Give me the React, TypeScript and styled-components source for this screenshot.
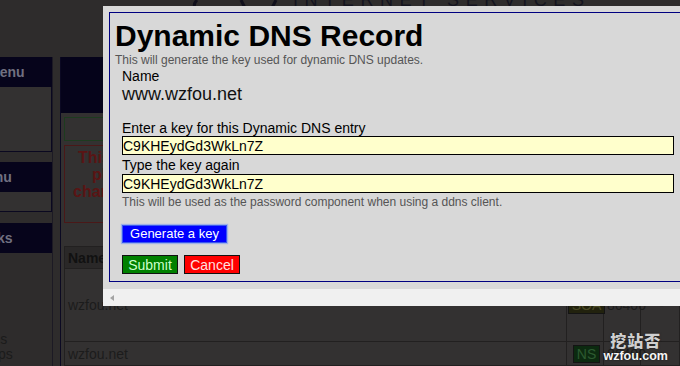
import styled, { createGlobalStyle } from "styled-components";

const GlobalStyle = createGlobalStyle`
  html, body {
    margin: 0;
    padding: 0;
  }
  body {
    background: #2e2c2c;
    font-family: "Liberation Sans", Arial, sans-serif;
  }
`;

const Page = styled.div`
  position: relative;
  width: 680px;
  height: 366px;
  overflow: hidden;
  background: #2e2c2c;
`;

/* ---------- dimmed page behind the dialog ---------- */

const Header = styled.div`
  height: 57px;
  display: flex;
  align-items: flex-start;
  padding-left: 190px;
  overflow: hidden;
`;

const Brand = styled.div`
  margin: -9px 0 0 3px;
  font-size: 18px;
  line-height: 18px;
  letter-spacing: 6.6px;
  color: #14141f;
  white-space: nowrap;
`;

const Body = styled.div`
  display: flex;
  align-items: stretch;
  height: 309px;
`;

const Sidebar = styled.div`
  width: 120px;
  margin-left: -68px;
  flex-shrink: 0;
  display: flex;
  flex-direction: column;
  border-right: 1px solid #1c1a24;
`;

const SideHead = styled.div<{ $indent: number; $gap: number }>`
  height: 30px;
  margin-top: ${({ $gap }) => $gap}px;
  padding-left: ${({ $indent }) => $indent}px;
  background: #06041b;
  color: #707080;
  font-size: 14px;
  font-weight: bold;
  line-height: 30px;
  white-space: nowrap;
`;

const SideBox = styled.div<{ $h: number }>`
  height: ${({ $h }) => $h}px;
  box-sizing: border-box;
  background: #333131;
  border-right: 1px solid #0a0820;
  border-bottom: 1px solid #0a0820;
`;

const SideLinks = styled.div`
  margin-top: auto;
  padding: 0 0 4px 27px;
  font-size: 14px;
  line-height: 15px;
  color: #1b1b1b;
`;

const Gutter = styled.div`
  width: 7px;
  flex-shrink: 0;
  border-right: 1px solid #0b0922;
`;

const Main = styled.div`
  flex: 1;
  display: flex;
  flex-direction: column;
  background: #333131;
`;

const Banner = styled.div`
  height: 57px;
  background: #05031a;
`;

const Notice = styled.div<{ $tone: "ok" | "warn"; $h: number }>`
  height: ${({ $h }) => $h}px;
  box-sizing: border-box;
  margin: 4px 0 0 3px;
  padding-top: 3px;
  border: 1px solid
    ${({ $tone }) => ($tone === "ok" ? "#1d3b1f" : "#4a1818")};
  color: #5a1414;
  font-size: 16px;
  font-weight: bold;
  line-height: 17px;
`;

const NoteLine = styled.div<{ $indent: number }>`
  padding-left: ${({ $indent }) => $indent}px;
  white-space: nowrap;
`;

const Table = styled.div`
  margin: 23px 0 0 3px;
  display: grid;
  grid-template-columns: 502px 37px 37px 1fr;
  border-left: 1px solid #222020;
  border-top: 1px solid #222020;
  color: #1a1a1a;
  font-size: 14px;
`;

const Cell = styled.div<{ $h: number; $head?: boolean; $center?: boolean }>`
  height: ${({ $h }) => $h}px;
  box-sizing: border-box;
  display: flex;
  align-items: center;
  justify-content: ${({ $center }) => ($center ? "center" : "flex-start")};
  padding-left: 3px;
  border-right: 1px solid #222020;
  border-bottom: 1px solid #222020;
  background: ${({ $head }) => ($head ? "#2a2828" : "transparent")};
  font-weight: ${({ $head }) => ($head ? "bold" : "normal")};
  color: ${({ $head }) => ($head ? "#111" : "#1c1c1c")};
`;

const Badge = styled.span<{ $kind: "soa" | "ns" }>`
  display: inline-block;
  padding: 0 3px;
  line-height: 16px;
  border: 1px solid #141414;
  background: ${({ $kind }) => ($kind === "soa" ? "#22220e" : "#0c2a10")};
  color: ${({ $kind }) => ($kind === "soa" ? "#4a4a24" : "#2c5a30")};
`;

const Watermark = styled.div`
  position: absolute;
  right: 12px;
  bottom: 3px;
  display: flex;
  flex-direction: column;
  align-items: center;
  text-shadow: 0 0 2px rgba(0, 0, 0, 0.6);
  font-weight: bold;
`;

const WmCn = styled.div`
  font-family: "Noto Sans CJK SC", sans-serif;
  font-size: 16px;
  font-weight: 900;
  line-height: 18px;
  letter-spacing: 1px;
  color: #cfcfcf;
`;

const WmEn = styled.div`
  font-size: 12.5px;
  line-height: 14px;
  color: #f4f4f4;
`;

/* ---------- dialog ---------- */

const Dialog = styled.div`
  position: absolute;
  left: 103px;
  top: 6px;
  width: 600px;
  height: 300px;
  display: flex;
  flex-direction: column;
  background: #d9d9d9;
`;

const Frame = styled.div`
  margin: 6px 0 0 6px;
  height: 270px;
  box-sizing: border-box;
  border: 1px solid #000080;
  padding-left: 5px;
  background: #d8d8d8;
`;

const Title = styled.h1`
  margin: 6px 0 0;
  font-size: 30px;
  line-height: 34px;
  font-weight: bold;
  color: #000;
`;

const Hint = styled.div<{ $gap?: number }>`
  margin-top: ${({ $gap }) => $gap ?? 0}px;
  font-size: 12px;
  line-height: 14px;
  color: #555;
`;

const Form = styled.div`
  margin-left: 7px;
  display: flex;
  flex-direction: column;
  align-items: flex-start;
`;

const Label = styled.div<{ $gap: number }>`
  margin-top: ${({ $gap }) => $gap}px;
  font-size: 14px;
  line-height: 16px;
  color: #000;
`;

const Domain = styled.div`
  font-size: 18px;
  line-height: 20px;
  color: #111;
`;

const KeyInput = styled.input<{ $gap: number }>`
  margin-top: ${({ $gap }) => $gap}px;
  width: 552px;
  height: 19px;
  box-sizing: border-box;
  padding: 0;
  border: 1px solid #000;
  background: #ffffcc;
  font-family: "Liberation Sans", Arial, sans-serif;
  font-size: 14px;
  color: #000;
  outline: none;
`;

const Button = styled.button<{ $bg: string; $fg: string; $w: number; $h: number }>`
  width: ${({ $w }) => $w}px;
  height: ${({ $h }) => $h}px;
  box-sizing: border-box;
  padding: 0;
  border: 1px solid #111;
  background: ${({ $bg }) => $bg};
  color: ${({ $fg }) => $fg};
  font-family: "Liberation Sans", Arial, sans-serif;
  font-size: 14px;
  line-height: 16px;
  cursor: pointer;
`;

const KeyButton = styled(Button)`
  margin-top: 16px;
  font-size: 13px;
  border-color: #3a58f0;
  box-shadow: 0 0 1px 1px rgba(90, 130, 255, 0.45);
`;

const Actions = styled.div`
  margin-top: 12px;
  display: flex;
  gap: 6px;
`;

const Scroller = styled.div`
  margin-top: auto;
  height: 17px;
  display: flex;
  align-items: center;
  padding-left: 7px;
  background: #f0f0f0;
`;

const Arrow = styled.span`
  width: 0;
  height: 0;
  border-top: 3px solid transparent;
  border-bottom: 3px solid transparent;
  border-right: 4px solid #a3a3a3;
`;

export default function App() {
  return (
    <Page>
      <GlobalStyle />
      <Header>
        <svg width="100" height="8" viewBox="0 0 100 8">
          <path d="M7 0 Q3 4 5 8" stroke="#10101c" strokeWidth="3" fill="none" />
          <path d="M51 0 L55 8" stroke="#10101c" strokeWidth="3" fill="none" />
          <path d="M86 0 L82 8" stroke="#10101c" strokeWidth="3" fill="none" />
        </svg>
        <Brand>INTERNET SERVICES</Brand>
      </Header>
      <Body>
        <Sidebar>
          <SideHead $indent={56} $gap={0}>Menu</SideHead>
          <SideBox $h={65} />
          <SideHead $indent={6} $gap={10}>Zone Menu</SideHead>
          <SideBox $h={20} />
          <SideHead $indent={44} $gap={11}>Links</SideHead>
          <SideLinks>
            <div>Options</div>
            <div>Backups</div>
          </SideLinks>
        </Sidebar>
        <Gutter />
        <Main>
          <Banner />
          <Notice $tone="ok" $h={25} />
          <Notice $tone="warn" $h={80}>
            <NoteLine $indent={13}>This zone is live on our nameservers,</NoteLine>
            <NoteLine $indent={27}>please take care when making</NoteLine>
            <NoteLine $indent={8}>changes to any of the records.</NoteLine>
          </Notice>
          <Table>
            <Cell $h={22} $head>Name</Cell>
            <Cell $h={22} $head>Type</Cell>
            <Cell $h={22} $head>TTL</Cell>
            <Cell $h={22} $head>Data</Cell>
            <Cell $h={73}>wzfou.net</Cell>
            <Cell $h={73} $center>
              <Badge $kind="soa">SOA</Badge>
            </Cell>
            <Cell $h={73}>86400</Cell>
            <Cell $h={73} $center>-</Cell>
            <Cell $h={24}>wzfou.net</Cell>
            <Cell $h={24} $center>
              <Badge $kind="ns">NS</Badge>
            </Cell>
            <Cell $h={24}>86400</Cell>
            <Cell $h={24} $center />
          </Table>
        </Main>
      </Body>

      <Watermark>
        <WmCn>挖站否</WmCn>
        <WmEn>wzfou.com</WmEn>
      </Watermark>

      <Dialog>
        <Frame>
          <Title>Dynamic DNS Record</Title>
          <Hint>This will generate the key used for dynamic DNS updates.</Hint>
          <Form>
            <Label $gap={1}>Name</Label>
            <Domain>www.wzfou.net</Domain>
            <Label $gap={16}>Enter a key for this Dynamic DNS entry</Label>
            <KeyInput $gap={0} defaultValue="C9KHEydGd3WkLn7Z" />
            <Label $gap={2}>Type the key again</Label>
            <KeyInput $gap={1} defaultValue="C9KHEydGd3WkLn7Z" />
            <Hint $gap={2}>
              This will be used as the password component when using a ddns client.
            </Hint>
            <KeyButton $bg="#0000ff" $fg="#ffffff" $w={105} $h={18}>
              Generate a key
            </KeyButton>
            <Actions>
              <Button $bg="#008000" $fg="#ccffcc" $w={56} $h={19}>
                Submit
              </Button>
              <Button $bg="#ff0000" $fg="#ffe0e0" $w={56} $h={19}>
                Cancel
              </Button>
            </Actions>
          </Form>
        </Frame>
        <Scroller>
          <Arrow />
        </Scroller>
      </Dialog>
    </Page>
  );
}
